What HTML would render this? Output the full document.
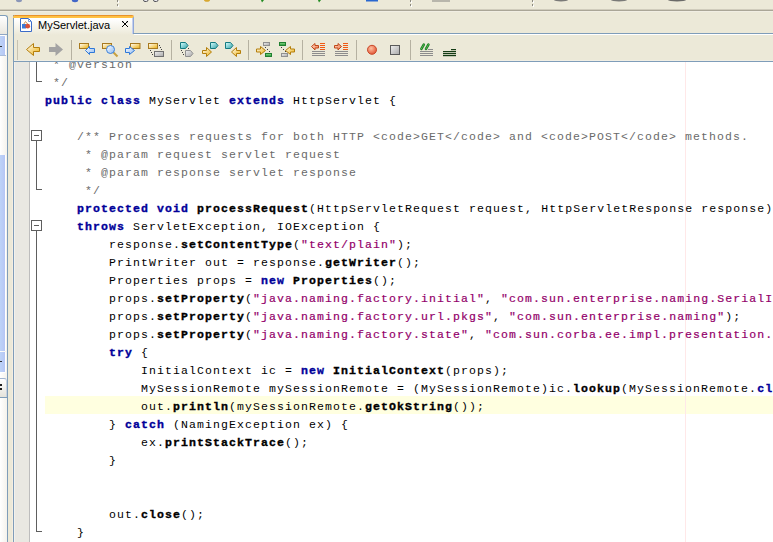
<!DOCTYPE html>
<html><head><meta charset="utf-8">
<style>
html,body{margin:0;padding:0;}
body{width:773px;height:542px;overflow:hidden;position:relative;background:#ECE9D8;font-family:"Liberation Sans",sans-serif;}
.a{position:absolute;}
#topline{left:0;top:9px;width:773px;height:2px;background:linear-gradient(#D0CCBC 0,#D0CCBC 1px,#AAA697 1px);}
#topline2{left:0;top:11px;width:773px;height:1px;background:#F1EEE3;}
#lp{left:0;top:15px;width:7px;height:527px;background:linear-gradient(90deg,#FFFFFF,#F4F2EC);}
#lpb{left:7px;top:33px;width:1px;height:509px;background:#7F9DB9;}
#edb{left:13px;top:15px;width:1px;height:527px;background:#7F9DB9;}
#tab{left:14px;top:15px;width:119px;height:20px;background:linear-gradient(#FFFFFF 20%,#ECE9D8);}
#tabtop{left:13px;top:15px;width:121px;height:3px;background:linear-gradient(#E8922C 0,#E8922C 1px,#FFBE3E 1px,#FFC548 3px);border-radius:2px 2px 0 0;}
#tabr{left:133px;top:17px;width:1px;height:17px;background:#90A8D8;}
#stripline{left:133px;top:33px;width:641px;height:1px;background:#7F9DB9;}
#tb{left:14px;top:35px;width:759px;height:26px;background:linear-gradient(#ECE9D8 0,#ECE9D8 25px,#F0EEE4 25px);}
#tbb{left:13px;top:61px;width:760px;height:1px;background:#7F9DB9;}
#ed{left:14px;top:62px;width:759px;height:480px;background:#FFFFFF;overflow:hidden;}
#gut{left:0;top:0;width:15px;height:480px;background:linear-gradient(90deg,#F2F1EC 0,#F2F1EC 1px,#E9E8E2 1px);}
#gutl{left:15px;top:0;width:1px;height:480px;background:#BDBDBD;}
#code{left:31px;top:-6px;font-family:"Liberation Mono",monospace;font-size:11.5px;letter-spacing:1.1px;line-height:18px;white-space:pre;color:#000;}
.k{color:#000099;font-weight:bold;-webkit-text-stroke:0.35px #000099;}
.m{font-weight:bold;-webkit-text-stroke:0.35px #000;}
.s{color:#93006A;-webkit-text-stroke:0.2px #93006A;}
.c{color:#6A6A6A;}
#hl{left:31px;top:334px;width:728px;height:18px;background:#FFFFE0;}
#margin{left:671px;top:0;width:1px;height:480px;background:#FFE8E8;}

#lpbtn1{left:0;top:15px;width:8px;height:19px;background:linear-gradient(#FFFFFF,#E9E7E0);border-top:1px solid #7F9DB9;border-right:1px solid #7F9DB9;border-radius:0 3px 0 0;box-sizing:border-box;}
#lpline1{left:0;top:34px;width:7px;height:1px;background:#8FA6C4;}
#lpbtn2{left:0;top:35px;width:5px;height:19px;background:linear-gradient(90deg,#BDD3F8,#B6C6F4);border:1px solid #fff;border-left:0;border-radius:0 2px 2px 0;}
#lpbtn2s{left:0;top:55px;width:6px;height:1px;background:#A9BCDB;}
#lpblue{left:0;top:155px;width:5px;height:196px;background:linear-gradient(90deg,#BDD3F8,#B6C6F4);border-right:1px solid #fff;}
#lpbtn3{left:0;top:352px;width:5px;height:20px;background:linear-gradient(90deg,#BDD3F8,#B6C6F4);border:1px solid #fff;border-left:0;border-top:0;border-radius:0 0 2px 0;}
#lpbtn4{left:0;top:378px;width:6px;height:19px;background:linear-gradient(#FFFFFF,#E3E1D9);border-top:1px solid #A0B4D0;border-right:1px solid #C8D2E0;border-radius:0 3px 0 0;}
#lpbtn4s{left:0;top:397px;width:7px;height:1px;background:#7F9DB9;}
#stripwhite{left:134px;top:34px;width:641px;height:1px;background:#FFFFFF;}
#tabtxt{left:38px;top:18px;font-size:11px;line-height:14px;color:#000;}
.sep{position:absolute;top:40px;width:1px;height:20px;background:#B5B1A1;}
</style></head>
<body>
<svg class="a" style="left:0;top:0" width="773" height="9" viewBox="0 0 773 9">
<ellipse cx="19" cy="0" rx="3" ry="2.2" fill="#8A96B8"/>
<ellipse cx="75" cy="0" rx="3.2" ry="2.2" fill="#4266C8"/>
<g fill="#8C8A80"><rect x="117" y="0" width="1" height="2"/><rect x="117" y="4" width="1" height="2"/><rect x="410" y="0" width="1" height="2"/><rect x="410" y="4" width="1" height="2"/><rect x="532" y="0" width="1" height="2"/><rect x="532" y="4" width="1" height="2"/></g>
<g fill="#FFFFFF"><rect x="118" y="1" width="1" height="2"/><rect x="118" y="5" width="1" height="2"/><rect x="411" y="1" width="1" height="2"/><rect x="411" y="5" width="1" height="2"/><rect x="533" y="1" width="1" height="2"/><rect x="533" y="5" width="1" height="2"/></g>
<rect x="143.5" y="-2" width="4.5" height="3.5" rx="1.5" fill="#E8E8EC" stroke="#55555A"/>
<rect x="153.5" y="-2" width="4.5" height="3.5" rx="1.5" fill="#E8E8EC" stroke="#55555A"/>
<ellipse cx="207" cy="0" rx="3" ry="1.8" fill="#D8A830"/>
<path d="M261 0 H264 L262 2.5 Z" fill="#1E8A1E"/>
<path d="M318 0 H321 L319 2.5 Z" fill="#1E8A1E"/>
<rect x="366" y="0" width="12" height="1.5" fill="#2A68D0"/>
<rect x="432" y="0" width="18" height="2" fill="#B8B6AC"/>
<ellipse cx="561" cy="0" rx="7" ry="1.5" fill="#7A7A78"/>
<ellipse cx="619" cy="0" rx="8" ry="1.5" fill="#7A7A78"/>
<ellipse cx="677" cy="0" rx="9" ry="1.5" fill="#6A6A68"/>
</svg>
<div class="a" id="topline"></div>
<div class="a" id="topline2"></div>
<div class="a" id="lp"></div>
<div class="a" id="lpbtn1"></div>
<div class="a" id="lpline1"></div>
<div class="a" id="lpbtn2"></div>
<div class="a" id="lpbtn2s"></div>
<div class="a" id="lpblue"></div>
<div class="a" id="lpbtn3"></div>
<div class="a" id="lpbtn4"></div>
<div class="a" id="lpbtn4s"></div>
<div class="a" style="left:0;top:46px;width:2px;height:1px;background:#303030"></div>
<div class="a" style="left:0;top:361px;width:2px;height:1px;background:#303030"></div>
<div class="a" style="left:0;top:384px;width:2px;height:2px;background:#202020"></div>
<div class="a" style="left:0;top:388px;width:2px;height:2px;background:#202020"></div>
<div class="a" id="lpb"></div>
<div class="a" id="edb"></div>
<div class="a" style="left:12px;top:62px;width:1px;height:480px;background:#F5EEE1"></div>
<div class="a" id="tab"></div>
<div class="a" id="tabtop"></div>
<div class="a" id="tabr"></div>
<div class="a" id="stripline"></div>
<div class="a" id="stripwhite"></div>
<div class="a" id="tb"></div>
<div class="a" id="tbb"></div>
<svg class="a" style="left:19px;top:17px" width="14" height="16" viewBox="0 0 14 16">
<path d="M1.5 1.5 H9.5 L12.5 4.5 V14.5 H1.5 Z" fill="#fff" stroke="#3B6BC8" stroke-width="1"/>
<path d="M9.5 1.5 V4.5 H12.5" fill="none" stroke="#7BA0E0" stroke-width="1"/>
<path d="M4.5 7.5 L6.5 4.5 L9 7.5" fill="none" stroke="#D09050" stroke-width="1"/>
<rect x="3" y="7" width="4" height="4.5" fill="#3A7AD8"/>
<circle cx="8.7" cy="9.2" r="2.4" fill="#D8503A"/>
</svg>
<div class="a" id="tabtxt">MyServlet.java</div>
<svg class="a" style="left:122px;top:21px" width="6" height="6" viewBox="0 0 6 6"><g fill="#000"><rect x="0" y="0" width="1" height="1"/><rect x="5" y="0" width="1" height="1"/><rect x="1" y="1" width="1" height="1"/><rect x="4" y="1" width="1" height="1"/><rect x="2" y="2" width="2" height="2"/><rect x="1" y="4" width="1" height="1"/><rect x="4" y="4" width="1" height="1"/><rect x="0" y="5" width="1" height="1"/><rect x="5" y="5" width="1" height="1"/></g><g fill="#808080"><rect x="1" y="0" width="1" height="1" opacity=".5"/><rect x="4" y="0" width="1" height="1" opacity=".5"/><rect x="0" y="1" width="1" height="1" opacity=".5"/><rect x="5" y="1" width="1" height="1" opacity=".5"/></g></svg>
<div class="a" style="left:132px;top:18px;width:1px;height:16px;background:#C4D0F0"></div>
<div class="sep" style="left:17px;background:#C6C2B2"></div>
<div class="sep" style="left:71px"></div>
<div class="sep" style="left:171px"></div>
<div class="sep" style="left:248px"></div>
<div class="sep" style="left:302px"></div>
<div class="sep" style="left:356px"></div>
<div class="sep" style="left:410px"></div>
<svg class="a" style="left:0;top:34px" width="473" height="27" viewBox="0 34 473 27">
<defs>
<linearGradient id="gy" x1="0" y1="0" x2="1" y2="1"><stop offset="0" stop-color="#FFFFFF"/><stop offset="0.75" stop-color="#F2C448"/><stop offset="1" stop-color="#E0A828"/></linearGradient>
<linearGradient id="gg" x1="0" y1="0" x2="1" y2="1"><stop offset="0" stop-color="#F0F0F0"/><stop offset="1" stop-color="#A8A8A8"/></linearGradient>
<linearGradient id="gb" x1="0" y1="0" x2="1" y2="1"><stop offset="0" stop-color="#FFFFFF"/><stop offset="1" stop-color="#8CB8F0"/></linearGradient>
<linearGradient id="gt" x1="0" y1="0" x2="1" y2="1"><stop offset="0" stop-color="#D8FFFF"/><stop offset="1" stop-color="#30A0A8"/></linearGradient>
<linearGradient id="ggr" x1="0" y1="0" x2="0" y2="1"><stop offset="0" stop-color="#90E090"/><stop offset="1" stop-color="#209030"/></linearGradient>
<radialGradient id="gr" cx="0.4" cy="0.35" r="0.7"><stop offset="0" stop-color="#FFC0A0"/><stop offset="1" stop-color="#E05030"/></radialGradient>
<linearGradient id="go" x1="0" y1="0" x2="1" y2="1"><stop offset="0" stop-color="#FFE0D0"/><stop offset="1" stop-color="#F07040"/></linearGradient>
</defs>
<!-- back -->
<path d="M26.5 49.5 L33.5 43.5 V47.5 H39.5 V51.5 H33.5 V55.5 Z" fill="url(#gy)" stroke="#B47E0C" stroke-width="1"/>
<!-- forward gray -->
<path d="M49 47 H55.5 V43 L63 49.5 L55.5 56 V52 H49 Z" fill="#A3A3A3"/>
<!-- icon A -->
<rect x="79.5" y="43.5" width="9" height="5" fill="url(#gy)" stroke="#A87A20"/>
<path d="M85.5 50.5 L89.5 46.5 V48.5 H94.5 V52.5 H89.5 V54.5 Z" fill="url(#gb)" stroke="#2E78D8"/>
<!-- icon B -->
<rect x="102.5" y="43.5" width="9" height="5" fill="url(#gy)" stroke="#A87A20"/>
<path d="M113.5 52.5 L117.5 56.5" stroke="#C8A040" stroke-width="2"/>
<circle cx="110.5" cy="49.5" r="4" fill="url(#gb)" stroke="#3A80D8"/>
<!-- icon C -->
<rect x="130.5" y="43.5" width="9.5" height="5" fill="url(#gy)" stroke="#A87A20"/>
<path d="M134.5 50.5 L129.5 46.5 V48.5 H125.5 V52.5 H129.5 V54.5 Z" fill="url(#gb)" stroke="#2E78D8"/>
<!-- icon D -->
<rect x="148.5" y="43.5" width="9" height="5" fill="url(#gy)" stroke="#A87A20"/>
<rect x="154.5" y="51.5" width="9" height="5" fill="url(#gg)" stroke="#707070"/>
<g fill="#404040"><rect x="159" y="45" width="1" height="1"/><rect x="160" y="47" width="1" height="1"/><rect x="161" y="49" width="1" height="1"/><rect x="150" y="50" width="1" height="1"/><rect x="151" y="52" width="1" height="1"/><rect x="152" y="54" width="1" height="1"/></g>
<!-- icon E -->
<path d="M180.5 42.5 H185.5 L188 45.5 L185.5 48.5 H180.5 Z" fill="url(#gt)" stroke="#157A80"/>
<path d="M185.5 50.5 H190.5 L193 53.5 L190.5 56.5 H185.5 Z" fill="url(#gg)" stroke="#909090"/>
<g fill="#404040"><rect x="181" y="50" width="1" height="1"/><rect x="182" y="52" width="1" height="1"/><rect x="183" y="54" width="1" height="1"/><rect x="188" y="48" width="1" height="1"/></g>
<!-- icon F -->
<path d="M210.5 42.5 H215.5 L218 45.5 L215.5 48.5 H210.5 Z" fill="url(#gt)" stroke="#157A80"/>
<path d="M202.5 50.5 H206.5 V47.5 L211.5 52 L206.5 56.5 V53.5 H202.5 Z" fill="url(#gy)" stroke="#B47E0C"/>
<!-- icon G -->
<path d="M225.5 42.5 H230.5 L233 45.5 L230.5 48.5 H225.5 Z" fill="url(#gt)" stroke="#157A80"/>
<path d="M240.5 50.5 H236.5 V47.5 L231.5 52 L236.5 56.5 V53.5 H240.5 Z" fill="url(#gy)" stroke="#B47E0C"/>
<!-- icon H -->
<rect x="263.5" y="42.5" width="6" height="3" fill="url(#gg)" stroke="#909090"/>
<path d="M256.5 49 H260.5 V46.5 L265.5 50.5 L260.5 54.5 V52 H256.5 Z" fill="url(#gy)" stroke="#B47E0C"/>
<g fill="#404040"><rect x="265" y="47" width="1" height="1"/><rect x="267" y="49" width="1" height="1"/><rect x="269" y="51" width="1" height="1"/></g>
<rect x="265.5" y="53.5" width="6" height="3" fill="url(#ggr)" stroke="#208030"/>
<!-- icon I -->
<rect x="279.5" y="42.5" width="6" height="3" fill="url(#ggr)" stroke="#208030"/>
<g fill="#404040"><rect x="281" y="47" width="1" height="1"/><rect x="283" y="49" width="1" height="1"/><rect x="285" y="51" width="1" height="1"/></g>
<path d="M294.5 49 H290.5 V46.5 L285.5 50.5 L290.5 54.5 V52 H294.5 Z" fill="url(#gy)" stroke="#B47E0C"/>
<rect x="281.5" y="53.5" width="6" height="3" fill="url(#gg)" stroke="#909090"/>
<!-- icon J -->
<path d="M311.5 46.5 L315 43.5 V45.5 H318.5 V48 H315 V50 Z" fill="url(#go)" stroke="#C04818"/>
<g fill="#F05A14"><rect x="320" y="43" width="5" height="1"/><rect x="320" y="45" width="5" height="1"/><rect x="320" y="47" width="5" height="1"/><rect x="320" y="49" width="5" height="1"/></g>
<g fill="#8C8C8C"><rect x="312" y="51" width="13" height="1"/><rect x="312" y="53" width="13" height="1"/><rect x="312" y="55" width="13" height="1"/></g>
<!-- icon K -->
<path d="M341.5 46.5 L338 43.5 V45.5 H334.5 V48 H338 V50 Z" fill="url(#go)" stroke="#C04818"/>
<g fill="#F05A14"><rect x="343" y="43" width="5" height="1"/><rect x="343" y="45" width="5" height="1"/><rect x="343" y="47" width="5" height="1"/><rect x="343" y="49" width="5" height="1"/></g>
<g fill="#8C8C8C"><rect x="335" y="51" width="13" height="1"/><rect x="335" y="53" width="13" height="1"/><rect x="335" y="55" width="13" height="1"/></g>
<!-- record -->
<circle cx="372" cy="49.8" r="4.5" fill="url(#gr)" stroke="#C84A2A"/>
<!-- stop -->
<rect x="390.5" y="45.5" width="9" height="9" fill="url(#gg)" stroke="#5A5A5A"/>
<!-- comment -->
<g stroke-linecap="round"><path d="M421.4 48.8 L423.8 44.6 M426 48.8 L428.4 44.6" stroke="#1E7E22" stroke-width="2.6"/><path d="M421.4 48.8 L423.8 44.6 M426 48.8 L428.4 44.6" stroke="#58C058" stroke-width="1" stroke-dasharray="1 1"/></g>
<g fill="#8C8C8C"><rect x="428" y="49" width="5" height="1"/><rect x="420" y="51" width="13" height="1"/><rect x="420" y="53" width="13" height="1"/><rect x="420" y="55" width="13" height="1"/></g>
<!-- uncomment -->
<g fill="#143C14"><rect x="451" y="49" width="5" height="1.2"/><rect x="443" y="51" width="13" height="1.2"/><rect x="443" y="53" width="13" height="1.2"/><rect x="443" y="55" width="13" height="1.2"/></g>
</svg>
<div class="a" id="ed">
<div class="a" id="gut"></div>
<div class="a" id="gutl"></div>
<svg class="a" style="left:0;top:0" width="40" height="480" viewBox="14 62 40 480">
<g fill="#5E5E5E">
<rect x="36" y="62" width="1" height="19"/><rect x="36" y="81" width="6" height="1"/>
<rect x="31" y="130" width="11" height="1"/><rect x="31" y="140" width="11" height="1"/><rect x="31" y="130" width="1" height="11"/><rect x="41" y="130" width="1" height="11"/><rect x="34" y="135" width="5" height="1"/>
<rect x="36" y="141" width="1" height="48"/><rect x="36" y="189" width="6" height="1"/>
<rect x="31" y="220" width="11" height="1"/><rect x="31" y="230" width="11" height="1"/><rect x="31" y="220" width="1" height="11"/><rect x="41" y="220" width="1" height="11"/><rect x="34" y="225" width="5" height="1"/>
<rect x="36" y="231" width="1" height="300"/><rect x="36" y="531" width="6" height="1"/>
</g></svg>
<div class="a" id="hl"></div>
<div class="a" id="margin"></div>
<div class="a" id="code"><span class="c"> * @version</span>
<span class="c"> */</span>
<span class="k">public</span> <span class="k">class</span> MyServlet <span class="k">extends</span> HttpServlet {

    <span class="c">/** Processes requests for both HTTP &lt;code&gt;GET&lt;/code&gt; and &lt;code&gt;POST&lt;/code&gt; methods.</span>
<span class="c">     * @param request servlet request</span>
<span class="c">     * @param response servlet response</span>
<span class="c">     */</span>
    <span class="k">protected</span> <span class="k">void</span> <span class="m">processRequest</span>(HttpServletRequest request, HttpServletResponse response)
    <span class="k">throws</span> ServletException, IOException {
        response.<span class="m">setContentType</span>(<span class="s">"text/plain"</span>);
        PrintWriter out = response.<span class="m">getWriter</span>();
        Properties props = <span class="k">new</span> <span class="m">Properties</span>();
        props.<span class="m">setProperty</span>(<span class="s">"java.naming.factory.initial"</span>, <span class="s">"com.sun.enterprise.naming.SerialInitContextFactory"</span>);
        props.<span class="m">setProperty</span>(<span class="s">"java.naming.factory.url.pkgs"</span>, <span class="s">"com.sun.enterprise.naming"</span>);
        props.<span class="m">setProperty</span>(<span class="s">"java.naming.factory.state"</span>, <span class="s">"com.sun.corba.ee.impl.presentation.rmi.JNDIStateFactoryImpl"</span>);
        <span class="k">try</span> {
            InitialContext ic = <span class="k">new</span> <span class="m">InitialContext</span>(props);
            MySessionRemote mySessionRemote = (MySessionRemote)ic.<span class="m">lookup</span>(MySessionRemote.<span class="k">class</span>.<span class="m">getName</span>());
            out.<span class="m">println</span>(mySessionRemote.<span class="m">getOkString</span>());
        } <span class="k">catch</span> (NamingException ex) {
            ex.<span class="m">printStackTrace</span>();
        }


        out.<span class="m">close</span>();
    }
</div>
</div>
</body></html>
